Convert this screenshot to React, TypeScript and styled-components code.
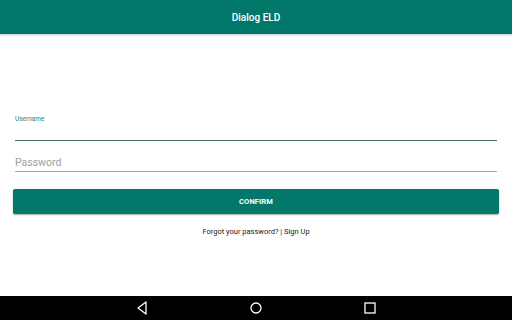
import React, { useState } from 'react';
import styled, { createGlobalStyle } from 'styled-components';

const GlobalStyle = createGlobalStyle`
  html, body {
    margin: 0;
    padding: 0;
    background: #ffffff;
    font-family: Roboto, 'Liberation Sans', sans-serif;
  }
`;

const Screen = styled.div`
  display: flex;
  flex-direction: column;
  width: 512px;
  height: 320px;
  overflow: hidden;
`;

const AppBar = styled.header`
  flex: 0 0 34px;
  display: flex;
  align-items: center;
  justify-content: center;
  background: #02786a;
  color: #ffffff;
  font-size: 10px;
  font-weight: 500;
  box-shadow: 0 1px 2px rgba(0, 0, 0, 0.25);
  position: relative;
  z-index: 1;
`;

const Main = styled.main`
  flex: 1 1 auto;
  display: flex;
  flex-direction: column;
  padding: 81px 13px 0;
`;

const Field = styled.div<{ tall?: boolean }>`
  display: flex;
  flex-direction: column;
  margin: 0 2px;
  border-bottom: 1px solid ${(p) => (p.tall ? '#a8a8a8' : '#3f6f66')};
`;

const Label = styled.label`
  font-size: 6.5px;
  line-height: 8px;
  color: #2f8570;
`;

const Input = styled.input<{ tall?: boolean }>`
  border: none;
  outline: none;
  background: transparent;
  padding: ${(p) => (p.tall ? '15px 0 2px' : '0 0 2px')};
  margin: 0;
  height: ${(p) => (p.tall ? '30px' : '17px')};
  box-sizing: border-box;
  font-family: Roboto, 'Liberation Sans', sans-serif;
  font-size: 10.5px;
  line-height: 13px;
  color: #212121;

  &::placeholder {
    color: #9e9e9e;
  }
`;

const ConfirmButton = styled.button`
  margin-top: 17px;
  height: 25px;
  border: none;
  border-radius: 2px;
  background: #02786a;
  color: #ffffff;
  font-family: Roboto, 'Liberation Sans', sans-serif;
  font-size: 7.5px;
  font-weight: 700;
  letter-spacing: 0.1px;
  box-shadow: 0 1px 1.5px rgba(0, 0, 0, 0.35);
`;

const Links = styled.p`
  margin: 12px 0 0;
  text-align: center;
  font-size: 7.5px;
  line-height: 12px;
  color: #212121;
`;

const NavBar = styled.nav`
  flex: 0 0 24px;
  display: flex;
  align-items: center;
  justify-content: center;
  gap: 96px;
  background: #000000;
`;

const NavIcon = styled.svg`
  width: 18px;
  height: 18px;
  display: block;
`;

const App: React.FC = () => {
  const [username, setUsername] = useState('');
  const [password, setPassword] = useState('');

  return (
    <>
      <GlobalStyle />
      <Screen>
        <AppBar>Dialog ELD</AppBar>

        <Main>
          <Field>
            <Label>Username</Label>
            <Input value={username} onChange={(e) => setUsername(e.target.value)} />
          </Field>
          <Field tall>
            <Input
              tall
              type="password"
              placeholder="Password"
              value={password}
              onChange={(e) => setPassword(e.target.value)}
            />
          </Field>

          <ConfirmButton>CONFIRM</ConfirmButton>

          <Links>Forgot your password? | Sign Up</Links>
        </Main>

        <NavBar>
          <NavIcon viewBox="0 0 18 18">
            <path d="M13 3 L5 9 L13 15 Z" fill="none" stroke="#ffffff" strokeWidth="1.3" strokeLinejoin="round" />
          </NavIcon>
          <NavIcon viewBox="0 0 18 18">
            <circle cx="9" cy="9" r="5" fill="none" stroke="#ffffff" strokeWidth="1.3" />
          </NavIcon>
          <NavIcon viewBox="0 0 18 18">
            <rect x="4" y="4" width="10" height="10" fill="none" stroke="#ffffff" strokeWidth="1.3" />
          </NavIcon>
        </NavBar>
      </Screen>
    </>
  );
};

export default App;
